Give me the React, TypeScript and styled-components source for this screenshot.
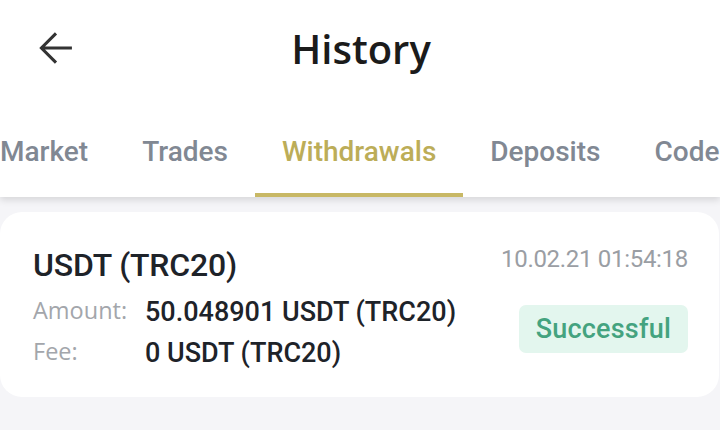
import React from "react";
import styled, { createGlobalStyle } from "styled-components";

const Global = createGlobalStyle`
  html, body { margin: 0; padding: 0; background: #f5f5f8; }
  body { width: 720px; height: 430px; overflow: hidden; font-family: Roboto, "Noto Sans", sans-serif; }
`;

const Page = styled.div`
  width: 720px;
  height: 430px;
  background: #f5f5f8;
  display: flex;
  flex-direction: column;
  overflow: hidden;
`;

const Top = styled.div`
  background: #ffffff;
  box-shadow: 0 3px 7px rgba(0, 0, 0, 0.13);
  position: relative;
  z-index: 1;
`;

const Header = styled.header`
  height: 96px;
  display: grid;
  grid-template-columns: 112px 1fr 112px;
  align-items: center;
`;

const BackButton = styled.button`
  border: 0;
  background: transparent;
  padding: 0;
  margin-left: 33px;
  width: 46px;
  height: 46px;
  display: flex;
  align-items: center;
  justify-content: center;
  color: #333333;
  cursor: pointer;
`;

const Title = styled.h1`
  margin: 0;
  text-align: center;
  font-family: "Open Sans", "Noto Sans", sans-serif;
  font-weight: 600;
  font-size: 40px;
  color: #1b1b1b;
  padding-left: 2px;
  padding-top: 1px;
`;

const TabList = styled.nav`
  display: flex;
  height: 101px;
  margin-left: -27px;
  white-space: nowrap;
  overflow: hidden;
`;

const Tab = styled.div<{ $active?: boolean }>`
  flex: none;
  padding: 39px 27px 0;
  box-sizing: border-box;
  height: 101px;
  font-family: Roboto, sans-serif;
  font-weight: 500;
  font-size: 28px;
  line-height: 34px;
  color: ${(p) => (p.$active ? "#bcad58" : "#818893")};
  border-bottom: 4px solid ${(p) => (p.$active ? "#c8b865" : "transparent")};
`;

const Card = styled.section`
  margin: 15px 1px 0 0;
  background: #ffffff;
  border-radius: 22px;
  padding: 33px 31px 23px 33px;
  display: flex;
  justify-content: space-between;
`;

const LeftCol = styled.div`
  display: flex;
  flex-direction: column;
`;

const Coin = styled.div`
  font-family: Roboto, sans-serif;
  font-size: 32px;
  line-height: 40px;
  font-weight: 500;
  color: #1e2329;
  margin-bottom: 7px;
  letter-spacing: -0.2px;
`;

const InfoRow = styled.div`
  display: flex;
  align-items: baseline;
  height: 41px;
  line-height: 41px;
`;

const Label = styled.span`
  width: 112px;
  flex: none;
  font-family: "Open Sans", "Noto Sans", sans-serif;
  font-size: 23.5px;
  color: #a3a6ab;
  position: relative;
  top: -2px;
`;

const Value = styled.span`
  font-family: Roboto, sans-serif;
  font-weight: 500;
  font-size: 27px;
  color: #1e2329;
  letter-spacing: 0px;
`;

const RightCol = styled.div`
  display: flex;
  flex-direction: column;
  align-items: flex-end;
`;

const DateText = styled.div`
  font-family: Roboto, sans-serif;
  font-size: 24px;
  line-height: 28px;
  color: #9a9ea4;
  letter-spacing: -0.3px;
`;

const Badge = styled.div`
  margin-top: 32px;
  height: 48px;
  padding: 0 17px;
  border-radius: 7px;
  background: #e3f6ee;
  color: #44a37f;
  font-family: Roboto, sans-serif;
  font-weight: 500;
  font-size: 27px;
  line-height: 48px;
  letter-spacing: 0.2px;
`;

const ArrowIcon = () => (
  <svg width="46" height="46" viewBox="0 0 24 24" fill="none">
    <path
      d="M20.3 12H4.6M12 4.4 4.4 12l7.6 7.6"
      stroke="currentColor"
      strokeWidth="1.6"
      strokeLinecap="butt"
      strokeLinejoin="miter"
    />
  </svg>
);

const tabs = ["Market", "Trades", "Withdrawals", "Deposits", "Codes"];

export default function App() {
  return (
    <Page>
      <Global />
      <Top>
        <Header>
          <BackButton aria-label="Back">
            <ArrowIcon />
          </BackButton>
          <Title>History</Title>
          <div />
        </Header>
        <TabList>
          {tabs.map((t) => (
            <Tab key={t} $active={t === "Withdrawals"}>
              {t}
            </Tab>
          ))}
        </TabList>
      </Top>
      <Card>
        <LeftCol>
          <Coin>USDT (TRC20)</Coin>
          <InfoRow>
            <Label>Amount:</Label>
            <Value>50.048901 USDT (TRC20)</Value>
          </InfoRow>
          <InfoRow>
            <Label>Fee:</Label>
            <Value>0 USDT (TRC20)</Value>
          </InfoRow>
        </LeftCol>
        <RightCol>
          <DateText>10.02.21 01:54:18</DateText>
          <Badge>Successful</Badge>
        </RightCol>
      </Card>
    </Page>
  );
}
